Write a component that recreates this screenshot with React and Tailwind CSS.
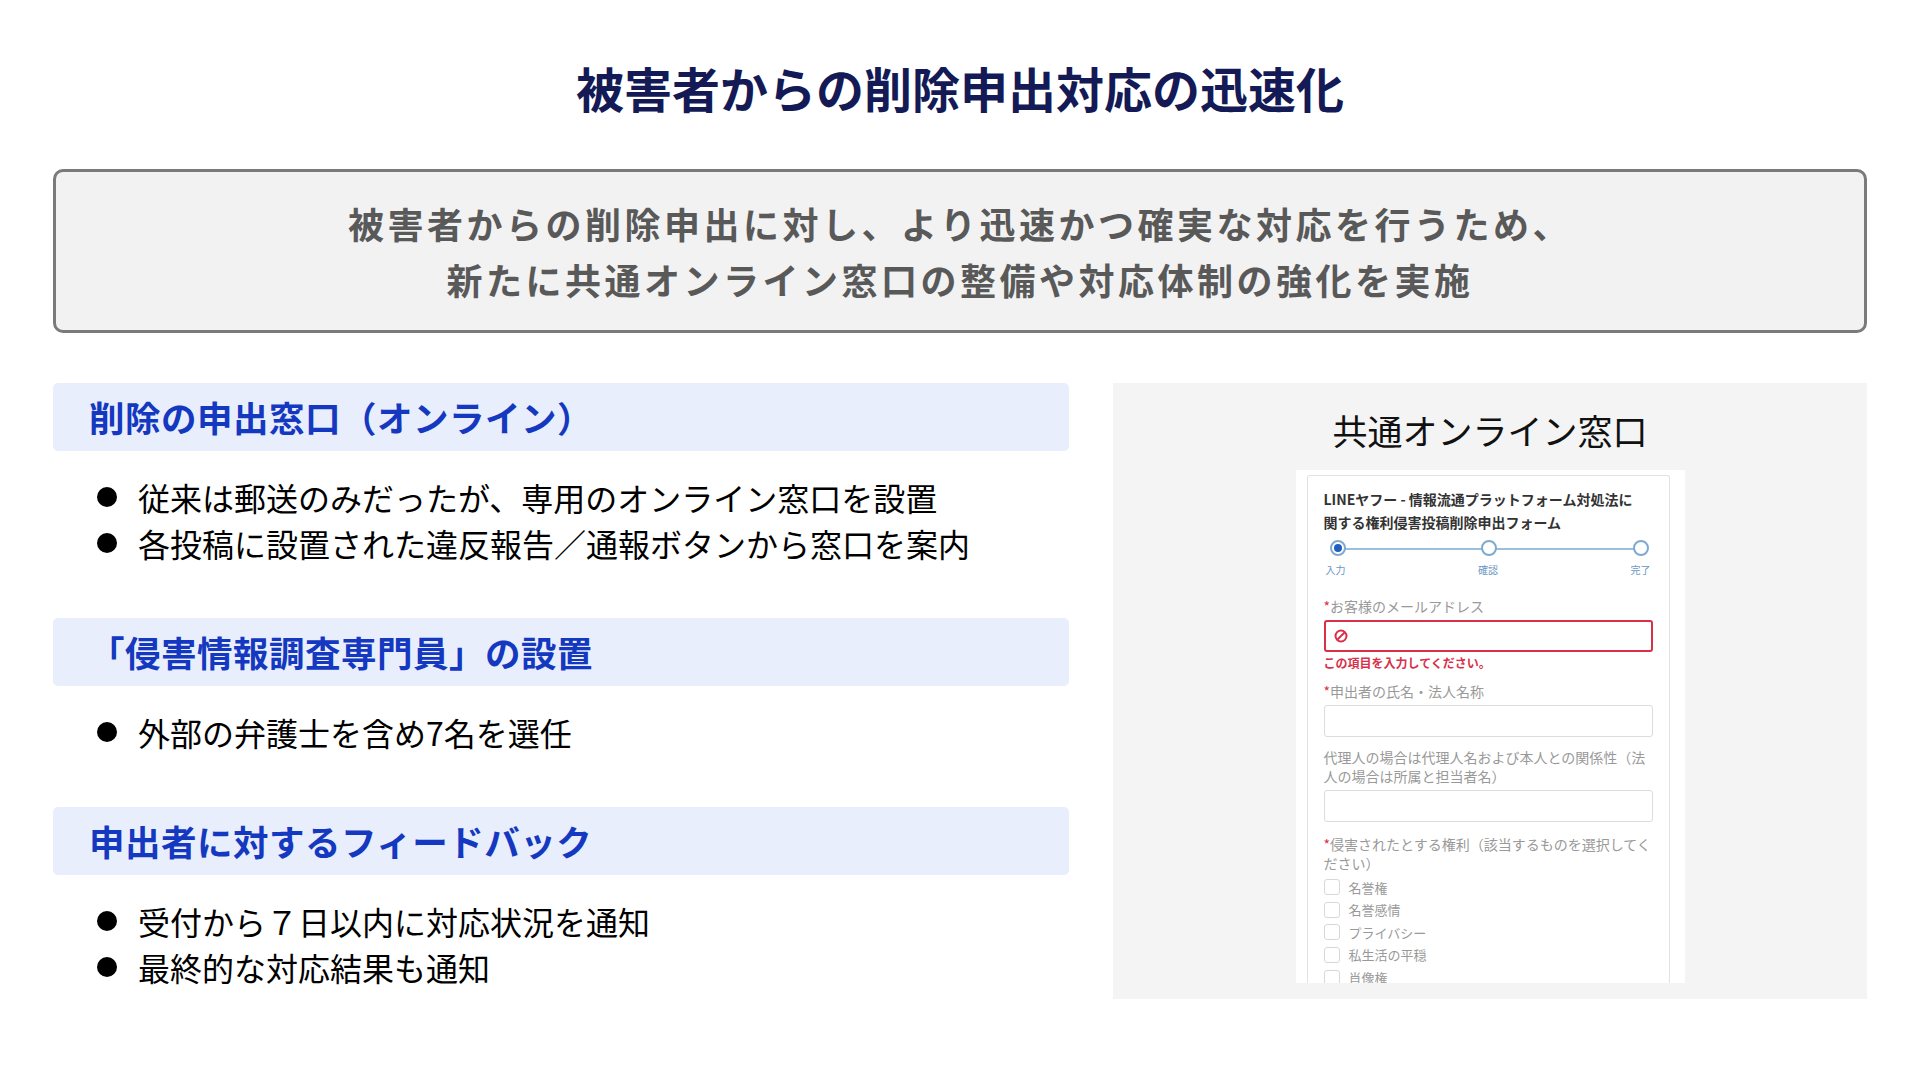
const F = { fontFamily: '"Noto Sans CJK JP", "Noto Sans", sans-serif' };

function Section({ title, items, mt }) {
  return (
    <div className={mt}>
      <div className="h-[68px] rounded-[5px] bg-[#e8eefc] flex items-center pl-[36px]">
        <span className="text-[35.5px] font-bold text-[#1438c0] tracking-[0.5px]">{title}</span>
      </div>
      <div className="mt-[25px] flex flex-col gap-[5px]">
        {items.map((t) => (
          <div key={t} className="flex items-center h-[41px]">
            <span className="w-[20px] h-[20px] rounded-full bg-black ml-[44px] mr-[21px]" />
            <span className="text-[32px] text-black">{t}</span>
          </div>
        ))}
      </div>
    </div>
  );
}

function Input({ err }) {
  return (
    <div className={`h-[32px] rounded-[3px] border ${err ? "border-2 border-[#d9304a]" : "border-[#dcdcdc]"} flex items-center pl-[8px]`}>
      {err && (
        <svg width="14" height="14" viewBox="0 0 14 14"><circle cx="7" cy="7" r="5.5" fill="none" stroke="#d9304a" strokeWidth="2" /><line x1="3.5" y1="10.5" x2="10.5" y2="3.5" stroke="#d9304a" strokeWidth="2" /></svg>
      )}
    </div>
  );
}

export default function App() {
  return (
    <div style={F} className="w-[1920px] h-[1080px] bg-white relative overflow-hidden">
      <div className="pt-[57px] text-center text-[48px] font-bold text-[#141a55] leading-[60px]">
        被害者からの削除申出対応の迅速化
      </div>
      <div className="mx-[53px] mt-[52px] h-[164px] rounded-[10px] border-[3px] border-[#7a7a7a] bg-[#f2f2f2] flex flex-col items-center justify-center text-[36px] font-bold text-[#595959] leading-[56px] tracking-[3.5px]">
        <div>被害者からの削除申出に対し、より迅速かつ確実な対応を行うため、</div>
        <div>新たに共通オンライン窓口の整備や対応体制の強化を実施</div>
      </div>
      <div className="mx-[53px] mt-[50px] flex justify-between">
        <div className="w-[1016px]">
          <Section title="削除の申出窓口（オンライン）" items={["従来は郵送のみだったが、専用のオンライン窓口を設置", "各投稿に設置された違反報告／通報ボタンから窓口を案内"]} />
          <Section mt="mt-[55px]" title="「侵害情報調査専門員」の設置" items={["外部の弁護士を含め7名を選任"]} />
          <Section mt="mt-[55px]" title="申出者に対するフィードバック" items={["受付から７日以内に対応状況を通知", "最終的な対応結果も通知"]} />
        </div>
        <div className="w-[754px] h-[616px] bg-[#f4f4f4] flex flex-col items-center">
          <div className="mt-[23px] text-[35px] text-[#111] leading-[48px]">共通オンライン窓口</div>
          <div className="mt-[16px] w-[389px] h-[513px] bg-white pl-[11px] pr-[15px] pt-[5px] overflow-hidden">
            <div className="h-full border border-[#e2e2e2] border-b-0 rounded-t-[3px] pl-[16px] pr-[12px] pt-[12px] overflow-hidden">
              <div className="text-[14px] font-bold text-[#333] leading-[23px] whitespace-nowrap">LINEヤフー - 情報流通プラットフォーム対処法に<br />関する権利侵害投稿削除申出フォーム</div>
              <div className="relative mt-[6px] h-[18px] ml-[6px] mr-[8px]">
                <div className="absolute left-[8px] right-[8px] top-[8px] h-[2px] bg-[#9cc0dc]" />
                <div className="absolute inset-0 flex justify-between">
                  <span className="w-[16px] h-[16px] rounded-full border-2 border-[#7fa9cf] bg-white flex items-center justify-center"><span className="w-[8px] h-[8px] rounded-full bg-[#1e5fc0]" /></span>
                  <span className="w-[16px] h-[16px] rounded-full border-2 border-[#7fa9cf] bg-white" />
                  <span className="w-[16px] h-[16px] rounded-full border-2 border-[#7fa9cf] bg-white" />
                </div>
              </div>
              <div className="flex justify-between text-[10px] text-[#6a96c4] mt-[4px] pl-[2px] pr-[6px]"><span>入力</span><span>確認</span><span>完了</span></div>
              <div className="mt-[20px] text-[14px] text-[#999] leading-[19px]"><span className="text-[#d9304a]">*</span>お客様のメールアドレス</div>
              <div className="mt-[4px] mr-[4px]"><Input err /></div>
              <div className="mt-[2px] text-[12px] font-bold text-[#d9304a] leading-[18px]">この項目を入力してください。</div>
              <div className="mt-[10px] text-[14px] text-[#999] leading-[19px]"><span className="text-[#d9304a]">*</span>申出者の氏名・法人名称</div>
              <div className="mt-[4px] mr-[4px]"><Input /></div>
              <div className="mt-[11px] text-[14px] text-[#999] leading-[19px]">代理人の場合は代理人名および本人との関係性（法人の場合は所属と担当者名）</div>
              <div className="mt-[4px] mr-[4px]"><Input /></div>
              <div className="mt-[13px] text-[14px] text-[#999] leading-[19px]"><span className="text-[#d9304a]">*</span>侵害されたとする権利（該当するものを選択してください）</div>
              <div className="mt-[3px] flex flex-col">
                {["名誉権", "名誉感情", "プライバシー", "私生活の平穏", "肖像権"].map((t) => (
                  <div key={t} className="flex items-center h-[22.6px]">
                    <span className="w-[16px] h-[16px] rounded-[3px] border border-[#d8d8d8] mr-[9px]" />
                    <span className="text-[13px] text-[#999]">{t}</span>
                  </div>
                ))}
              </div>
            </div>
          </div>
        </div>
      </div>
    </div>
  );
}
